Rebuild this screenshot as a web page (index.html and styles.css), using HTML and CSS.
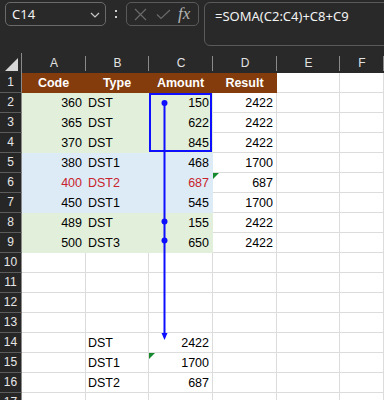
FILE: index.html
```html
<!DOCTYPE html>
<html>
<head>
<meta charset="utf-8">
<link rel="stylesheet" href="styles.css">
</head>
<body>
<div class="app">
  <div class="toolbar">
    <div class="namebox">
      <span class="nb-text">C14</span>
      <svg class="chev" width="10" height="6" viewBox="0 0 10 6"><path d="M1 1 L5 5 L9 1" fill="none" stroke="#c8c8c8" stroke-width="1.2"/></svg>
    </div>
    <div class="dots"><i></i><i></i></div>
    <div class="fbtns">
      <svg class="ic-x" width="13" height="13" viewBox="0 0 13 13"><path d="M1 1 L12 12 M12 1 L1 12" stroke="#6a6a6a" stroke-width="1.2" fill="none"/></svg>
      <svg class="ic-check" width="15" height="11" viewBox="0 0 15 11"><path d="M1 5.5 L5 9.5 L14 1" stroke="#6a6a6a" stroke-width="1.2" fill="none"/></svg>
      <span class="fx">fx</span>
    </div>
    <div class="formula">=SOMA(C2:C4)+C8+C9</div>
  </div>

  <div class="sheet">
    <div class="corner"><svg width="13" height="13" viewBox="0 0 13 13"><path d="M13 0 L13 13 L0 13 Z" fill="#d6d6d6"/></svg></div>
    <div class="ch">A</div><div class="ch">B</div><div class="ch">C</div><div class="ch">D</div><div class="ch">E</div><div class="ch">F</div>

    <div class="rh">1</div>
    <div class="c hd">Code</div><div class="c hd">Type</div><div class="c hd">Amount</div><div class="c hd">Result</div><div class="c"></div><div class="c"></div>

    <div class="rh">2</div>
    <div class="c g r">360</div><div class="c g">DST</div><div class="c g r">150</div><div class="c r">2422</div><div class="c"></div><div class="c"></div>
    <div class="rh">3</div>
    <div class="c g r">365</div><div class="c g">DST</div><div class="c g r">622</div><div class="c r">2422</div><div class="c"></div><div class="c"></div>
    <div class="rh">4</div>
    <div class="c g r">370</div><div class="c g">DST</div><div class="c g r">845</div><div class="c r">2422</div><div class="c"></div><div class="c"></div>
    <div class="rh">5</div>
    <div class="c b r">380</div><div class="c b">DST1</div><div class="c b r">468</div><div class="c r">1700</div><div class="c"></div><div class="c"></div>
    <div class="rh">6</div>
    <div class="c b r red">400</div><div class="c b red">DST2</div><div class="c b r red">687</div><div class="c r">687</div><div class="c"></div><div class="c"></div>
    <div class="rh">7</div>
    <div class="c b r">450</div><div class="c b">DST1</div><div class="c b r">545</div><div class="c r">1700</div><div class="c"></div><div class="c"></div>
    <div class="rh">8</div>
    <div class="c g r">489</div><div class="c g">DST</div><div class="c g r">155</div><div class="c r">2422</div><div class="c"></div><div class="c"></div>
    <div class="rh">9</div>
    <div class="c g r">500</div><div class="c g">DST3</div><div class="c g r">650</div><div class="c r">2422</div><div class="c"></div><div class="c"></div>

    <div class="rh">10</div>
    <div class="c"></div><div class="c"></div><div class="c"></div><div class="c"></div><div class="c"></div><div class="c"></div>
    <div class="rh">11</div>
    <div class="c"></div><div class="c"></div><div class="c"></div><div class="c"></div><div class="c"></div><div class="c"></div>
    <div class="rh">12</div>
    <div class="c"></div><div class="c"></div><div class="c"></div><div class="c"></div><div class="c"></div><div class="c"></div>
    <div class="rh">13</div>
    <div class="c"></div><div class="c"></div><div class="c"></div><div class="c"></div><div class="c"></div><div class="c"></div>
    <div class="rh">14</div>
    <div class="c"></div><div class="c">DST</div><div class="c r">2422</div><div class="c"></div><div class="c"></div><div class="c"></div>
    <div class="rh">15</div>
    <div class="c"></div><div class="c">DST1</div><div class="c r">1700</div><div class="c"></div><div class="c"></div><div class="c"></div>
    <div class="rh">16</div>
    <div class="c"></div><div class="c">DST2</div><div class="c r">687</div><div class="c"></div><div class="c"></div><div class="c"></div>
    <div class="rh">17</div>
    <div class="c"></div><div class="c"></div><div class="c"></div><div class="c"></div><div class="c"></div><div class="c"></div>

    <svg class="overlay" width="384" height="360" viewBox="0 0 384 360">
      <rect x="150" y="41" width="61" height="57" fill="none" stroke="#0f0fff" stroke-width="2"/>
      <line x1="164.5" y1="50" x2="164.5" y2="281" stroke="#0f0fff" stroke-width="2"/>
      <polygon points="161.5,280 167.5,280 164.5,287" fill="#0f0fff"/>
      <circle cx="164.5" cy="50" r="3" fill="#0f0fff"/>
      <circle cx="164.5" cy="168.5" r="3" fill="#0f0fff"/>
      <circle cx="164.5" cy="187.5" r="3" fill="#0f0fff"/>
      <polygon points="213,120 219,120 213,126" fill="#14892e"/>
      <polygon points="149,300 155,300 149,306" fill="#14892e"/>
    </svg>
  </div>
</div>
</body>
</html>
```

FILE: styles.css
```css
* { box-sizing: border-box; }
html, body {
  margin: 0;
  padding: 0;
  background: #ffffff;
  overflow: hidden;
}
.app {
  width: 384px;
  height: 400px;
  overflow: hidden;
  font-family: "Liberation Sans", Arial, sans-serif;
}
.toolbar {
  height: 53px;
  background: #292929;
  display: flex;
  align-items: flex-start;
  padding: 2px 0 0 5px;
}
.namebox {
  width: 101px;
  height: 24px;
  border: 1px solid #6a6a6a;
  border-radius: 5px;
  display: flex;
  align-items: center;
  justify-content: space-between;
  padding: 0 5px 0 6px;
  flex: none;
}
.nb-text {
  color: #f2f2f2;
  font-family: "Noto Sans", sans-serif;
  font-size: 13px;
}
.chev { margin-top: 1px; }
.dots {
  width: 20px;
  height: 24px;
  display: flex;
  flex-direction: column;
  align-items: center;
  justify-content: center;
  gap: 4px;
  flex: none;
}
.dots i {
  display: block;
  width: 2px;
  height: 2px;
  background: #cfcfcf;
}
.fbtns {
  width: 73px;
  height: 24px;
  border: 1px solid #5a5a5a;
  border-radius: 5px;
  display: flex;
  align-items: center;
  padding: 0 0 0 7px;
  flex: none;
}
.ic-x { margin-right: 9px; }
.ic-check { margin-right: 7px; }
.fx {
  color: #b4b4b4;
  font-family: "Liberation Serif", serif;
  font-style: italic;
  font-size: 17px;
  line-height: 20px;
}
.formula {
  margin-left: 5px;
  width: 200px;
  height: 44px;
  flex: none;
  border: 1px solid #5a5a5a;
  border-radius: 6px;
  color: #f2f2f2;
  font-family: "Noto Sans", sans-serif;
  font-size: 13px;
  padding: 3px 0 0 10px;
  line-height: 20px;
  white-space: nowrap;
}
.sheet {
  position: relative;
  display: grid;
  grid-template-columns: 22px 64px 63px 64px 64px 63px 44px;
  grid-auto-rows: 20px;
  background: #ffffff;
}
.corner {
  background: #292929;
  display: flex;
  align-items: flex-end;
  justify-content: flex-end;
  padding: 0 3px 2px 0;
  border-right: 1px solid #8a8a8a;
}
.ch {
  background: #292929 linear-gradient(#8a8a8a, #8a8a8a) no-repeat right 3px / 1px 15px;
  color: #e2e2e2;
  font-size: 12px;
  text-align: center;
  line-height: 21px;
}
.ch:last-of-type { background-image: none; }
.rh {
  background: #262626;
  color: #e6e6e6;
  font-size: 12px;
  text-align: center;
  line-height: 19px;
  border-bottom: 1px solid #5c5c5c;
  border-right: 1px solid #8a8a8a;
}
.c {
  border-right: 1px solid #dcdcdc;
  border-bottom: 1px solid #dcdcdc;
  font-size: 12.5px;
  line-height: 20px;
  padding: 0 3px 0 2px;
  color: #000;
  white-space: nowrap;
  overflow: hidden;
}
.r { text-align: right; }
.hd {
  background: #843c0c;
  border-color: #843c0c;
  color: #ffffff;
  font-weight: bold;
  text-align: center;
  padding: 0;
}
.g { background: #e2efda; border-color: #e2efda; }
.b { background: #ddebf7; border-color: #ddebf7; }
.red { color: #c8232c; }
.overlay {
  position: absolute;
  left: 0;
  top: 0;
  pointer-events: none;
}
```
